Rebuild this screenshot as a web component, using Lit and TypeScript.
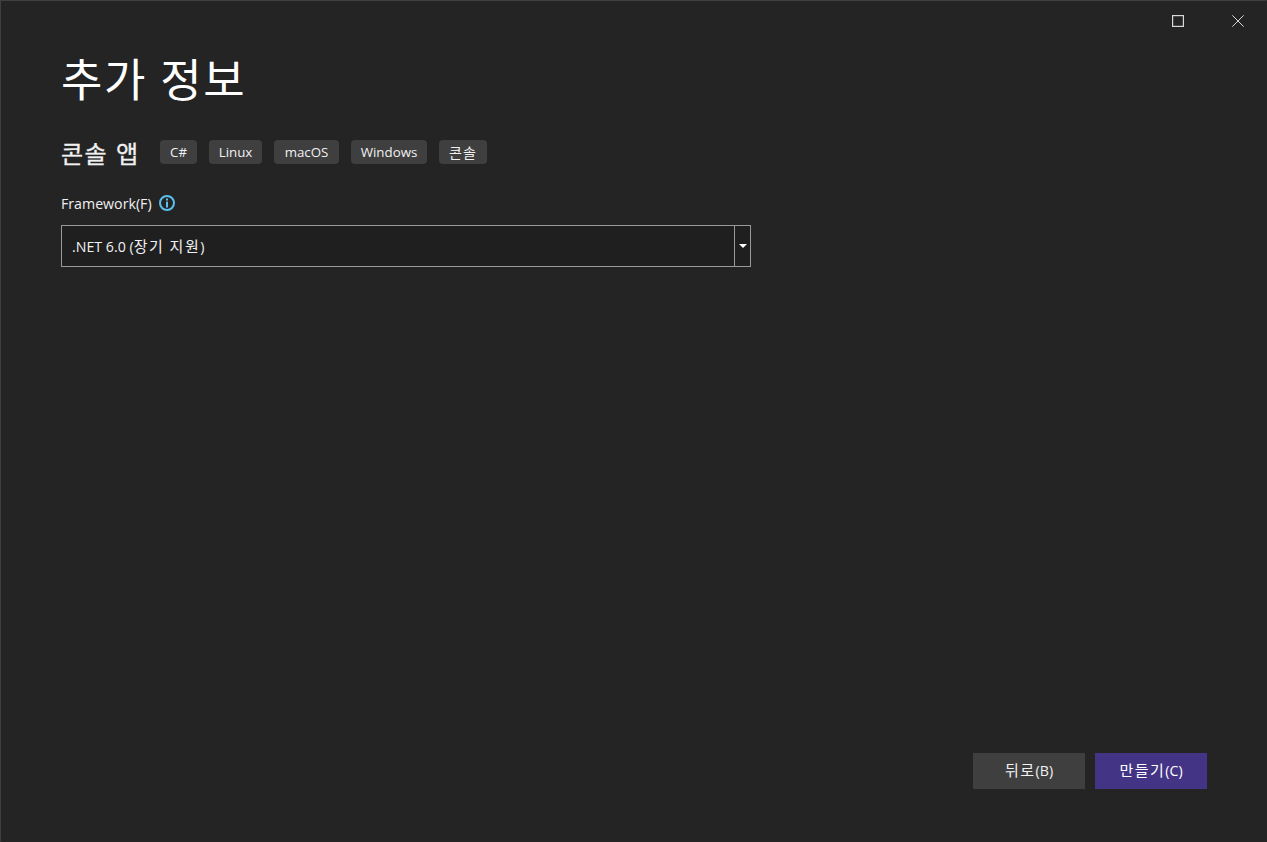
import { LitElement, html, css } from "lit";
import { customElement } from "lit/decorators.js";

const FONT = css`"Open Sans", "Noto Sans CJK KR", sans-serif`;

@customElement("app-root")
export class AppRoot extends LitElement {
  static styles = css`
    :host {
      display: flex;
      flex-direction: column;
      box-sizing: border-box;
      width: 1267px;
      height: 842px;
      background: #242424;
      border: 1px solid #3f3f3f;
      border-right-color: #262626;
      border-bottom-color: #262626;
      color: #f1f1f1;
      font-family: ${FONT};
      overflow: hidden;
    }
    .titlebar {
      display: flex;
      justify-content: flex-end;
      gap: 4px;
      height: 40px;
      flex: none;
    }
    .win {
      width: 56px;
      height: 40px;
      display: flex;
      align-items: center;
      justify-content: center;
      color: #d8d8d8;
    }
    .content {
      flex: 1;
      display: flex;
      flex-direction: column;
      padding: 0 59px 52px 60px;
    }
    h1 {
      margin: 8px 0 0;
      font-weight: 400;
      font-size: 45px;
      line-height: 62px;
      color: #fff;
      letter-spacing: 1.6px;
    }
    .sub {
      display: flex;
      align-items: center;
      margin-top: 29px;
      height: 24px;
    }
    .sub h2 {
      margin: 0;
      font-size: 24px;
      font-weight: 400;
      -webkit-text-stroke: 0.3px #f1f1f1;
      letter-spacing: 1.5px;
      width: 99px;
      color: #f1f1f1;
      white-space: nowrap;
    }
    .tags {
      display: grid;
      grid-template-columns: 37px 53px 65px 76px 48px;
      gap: 12px;
    }
    .tag {
      height: 24px;
      line-height: 25px;
      text-align: center;
      background: #3f3f40;
      border-radius: 4px;
      font-size: 13.3px;
      color: #f1f1f1;
    }
    .tag.ko { font-size: 14px; letter-spacing: 1px; }
    .label {
      display: flex;
      align-items: center;
      gap: 7px;
      margin-top: 28px;
      height: 22px;
      font-size: 14.2px;
      color: #f1f1f1;
    }
    .select {
      display: flex;
      width: 690px;
      height: 42px;
      box-sizing: border-box;
      margin-top: 11px;
      border: 1px solid #999;
      background: #1f1f1f;
      font-size: 14.2px;
    }
    .value {
      flex: 1;
      padding-left: 10px;
      line-height: 40px;
    }
    .ko { font-size: 15px; letter-spacing: 1.5px; }
    .arrow {
      width: 15px;
      border-left: 1px solid #999;
      display: flex;
      align-items: center;
      justify-content: center;
    }
    .caret {
      width: 0;
      height: 0;
      border-left: 4px solid transparent;
      border-right: 4px solid transparent;
      border-top: 4px solid #fff;
    }
    .spacer { flex: 1; }
    .actions { display: flex; justify-content: flex-end; gap: 10px; }
    .btn {
      width: 112px;
      height: 36px;
      line-height: 35px;
      text-align: center;
      font-size: 14.2px;
      background: #3f3f40;
      color: #f1f1f1;
    }
    .btn.primary { background: #433485; color: #fff; }
  `;

  render() {
    return html`
      <div class="titlebar">
        <div class="win">
          <svg width="12" height="12" viewBox="0 0 12 12" fill="none" stroke="currentColor" stroke-width="1.2"><rect x="0.6" y="0.6" width="10.8" height="10.8"/></svg>
        </div>
        <div class="win">
          <svg width="12" height="12" viewBox="0 0 12 12" fill="none" stroke="currentColor" stroke-width="1"><path d="M0.3 0.3 11.7 11.7M11.7 0.3 0.3 11.7"/></svg>
        </div>
      </div>
      <div class="content">
        <h1>추가 정보</h1>
        <div class="sub">
          <h2>콘솔 앱</h2>
          <div class="tags">
            ${["C#", "Linux", "macOS", "Windows"].map((t) => html`<span class="tag">${t}</span>`)}
            <span class="tag ko">콘솔</span>
          </div>
        </div>
        <div class="label">
          <span>Framework(F)</span>
          <svg width="16" height="16" viewBox="0 0 16 16" fill="none">
            <circle cx="8" cy="8" r="7" stroke="#5cc0ee" stroke-width="2"/>
            <rect x="7" y="3.5" width="2" height="2" fill="#5cc0ee"/>
            <rect x="7" y="6.6" width="2" height="5.9" fill="#5cc0ee"/>
          </svg>
        </div>
        <div class="select">
          <div class="value">.NET 6.0 (<span class="ko">장기 지원</span>)</div>
          <div class="arrow"><div class="caret"></div></div>
        </div>
        <div class="spacer"></div>
        <div class="actions">
          <div class="btn"><span class="ko">뒤로</span>(B)</div>
          <div class="btn primary"><span class="ko">만들기</span>(C)</div>
        </div>
      </div>
    `;
  }
}
